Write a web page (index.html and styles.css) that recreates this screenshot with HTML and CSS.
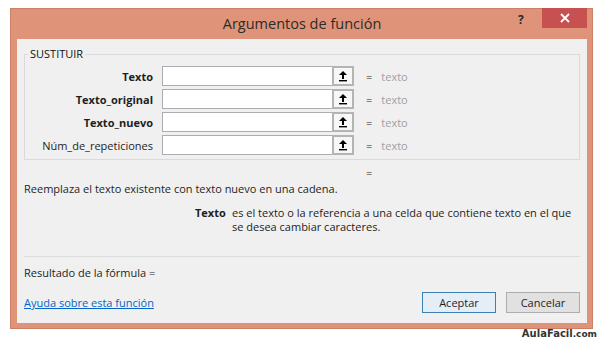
FILE: index.html
```html
<!DOCTYPE html>
<html lang="es">
<head>
<meta charset="utf-8">
<link rel="stylesheet" href="styles.css">
</head>
<body>
<div class="window">
  <div class="titlebar">
    <div class="title">Argumentos de función</div>
    <div class="help">?</div>
    <div class="close">
      <svg width="10" height="10" viewBox="0 0 10 10"><path d="M1 1 L9 9 M9 1 L1 9" stroke="#fff" stroke-width="1.8" fill="none"/></svg>
    </div>
  </div>
  <div class="client">
    <fieldset class="group">
      <legend>SUSTITUIR</legend>
      <div class="rows">
        <div class="lbl bold">Texto</div>
        <div class="inp"></div>
        <div class="upbtn"><svg width="10" height="12" viewBox="0 0 10 12"><path d="M5 1 L9 5 H6 V9 H4 V5 H1 Z" fill="#000"/><rect x="1" y="10" width="8" height="1.4" fill="#000"/></svg></div>
        <div class="val">texto</div>

        <div class="lbl bold">Texto_original</div>
        <div class="inp"></div>
        <div class="upbtn"><svg width="10" height="12" viewBox="0 0 10 12"><path d="M5 1 L9 5 H6 V9 H4 V5 H1 Z" fill="#000"/><rect x="1" y="10" width="8" height="1.4" fill="#000"/></svg></div>
        <div class="val">texto</div>

        <div class="lbl bold">Texto_nuevo</div>
        <div class="inp"></div>
        <div class="upbtn"><svg width="10" height="12" viewBox="0 0 10 12"><path d="M5 1 L9 5 H6 V9 H4 V5 H1 Z" fill="#000"/><rect x="1" y="10" width="8" height="1.4" fill="#000"/></svg></div>
        <div class="val">texto</div>

        <div class="lbl">Núm_de_repeticiones</div>
        <div class="inp"></div>
        <div class="upbtn"><svg width="10" height="12" viewBox="0 0 10 12"><path d="M5 1 L9 5 H6 V9 H4 V5 H1 Z" fill="#000"/><rect x="1" y="10" width="8" height="1.4" fill="#000"/></svg></div>
        <div class="val">texto</div>
      </div>
    </fieldset>
    <div class="result-eq">=</div>
    <div class="summary">Reemplaza el texto existente con texto nuevo en una cadena.</div>
    <div class="argdesc">
      <div class="argname">Texto</div>
      <div class="argtext">es el texto o la referencia a una celda que contiene texto en el que se desea cambiar caracteres.</div>
    </div>
    <div class="sep"></div>
    <div class="formula">Resultado de la fórmula =</div>
    <div class="footer">
      <a class="helplink" href="#">Ayuda sobre esta función</a>
      <div class="buttons">
        <div class="btn primary">Aceptar</div>
        <div class="btn">Cancelar</div>
      </div>
    </div>
  </div>
</div>
<div class="logo">AulaFacil<span class="dotcom">.com</span></div>
</body>
</html>
```

FILE: styles.css
```css
html, body {
  margin: 0;
  padding: 0;
  background: #ffffff;
}
body {
  font-family: "Open Sans", "Noto Sans", sans-serif;
  font-size: 11px;
  color: #1e1e1e;
}
.window {
  margin: 8px 0 0 10px;
  width: 583px;
  height: 321px;
  box-sizing: border-box;
  background: #df9479;
  border: 1px solid #c98067;
  padding: 0 5px 5px 6px;
  display: flex;
  flex-direction: column;
}
.titlebar {
  height: 30px;
  display: flex;
  align-items: flex-start;
}
.title {
  flex: 1;
  text-align: center;
  font-size: 14.5px;
  line-height: 29px;
  color: #2b2b2b;
  padding-left: 69px;
}
.help {
  width: 16px;
  font-weight: bold;
  font-size: 12px;
  line-height: 22px;
  color: #2b2b2b;
  margin-right: 8px;
}
.close {
  width: 45px;
  height: 20px;
  margin-top: -1px;
  background: #c75050;
  display: flex;
  align-items: center;
  justify-content: center;
}
.client {
  flex: 1;
  background: #f0f0f0;
  padding: 0 7px;
}
.group {
  margin: 9px 0 0 0;
  padding: 0;
  border: 1px solid #dadada;
  height: 112px;
  box-sizing: border-box;
}
.group legend {
  padding: 0 2px;
  margin-left: 3px;
  font-size: 11px;
  line-height: 12px;
  color: #111;
}
.rows {
  display: grid;
  grid-template-columns: 128px 179px 31px 1fr;
  grid-auto-rows: 20px;
  row-gap: 3px;
  margin-top: 6px;
  align-items: center;
}
.lbl {
  text-align: right;
  font-size: 11px;
  color: #1e1e1e;
}
.lbl.bold { font-weight: bold; }
.inp {
  margin-left: 9px;
  height: 20px;
  box-sizing: border-box;
  background: #fff;
  border: 1px solid #abadb3;
  border-right: none;
}
.upbtn {
  width: 22px;
  height: 20px;
  box-sizing: border-box;
  border: 2px solid #b4b4b4;
  background: #f7f7f7;
  display: flex;
  align-items: center;
  justify-content: center;
}
.val {
  margin-left: 3px;
  color: #a0a0a0;
  font-size: 11px;
}
.val::before {
  content: "=";
  color: #1e1e1e;
  margin-right: 9px;
}
.result-eq {
  margin: 6px 0 0 342px;
  line-height: 13px;
  height: 13px;
}
.summary {
  margin-top: 2px;
  line-height: 15px;
}
.argdesc {
  display: flex;
  margin-top: 10px;
  padding-left: 171px;
}
.argname {
  font-weight: bold;
  width: 37px;
  line-height: 14px;
}
.argtext {
  width: 345px;
  line-height: 14px;
}
.sep {
  margin-top: 22px;
  height: 1px;
  background: #dcdcdc;
}
.formula {
  margin-top: 8px;
  line-height: 15px;
}
.footer {
  display: flex;
  justify-content: space-between;
  align-items: center;
  margin-top: 12px;
}
.helplink {
  color: #0066cc;
  text-decoration: underline;
}
.buttons {
  display: flex;
  gap: 10px;
}
.btn {
  width: 74px;
  height: 21px;
  box-sizing: border-box;
  border: 1px solid #adadad;
  background: #e1e1e1;
  text-align: center;
  line-height: 19px;
  color: #1e1e1e;
}
.btn.primary {
  border-color: #3c7fb1;
  background: #e5eef6;
}
.logo {
  width: 597px;
  text-align: right;
  font-family: "DejaVu Sans", sans-serif;
  font-weight: bold;
  font-size: 10px;
  line-height: 10px;
  color: #333;
}
.dotcom {
  font-size: 9px;
}
```
